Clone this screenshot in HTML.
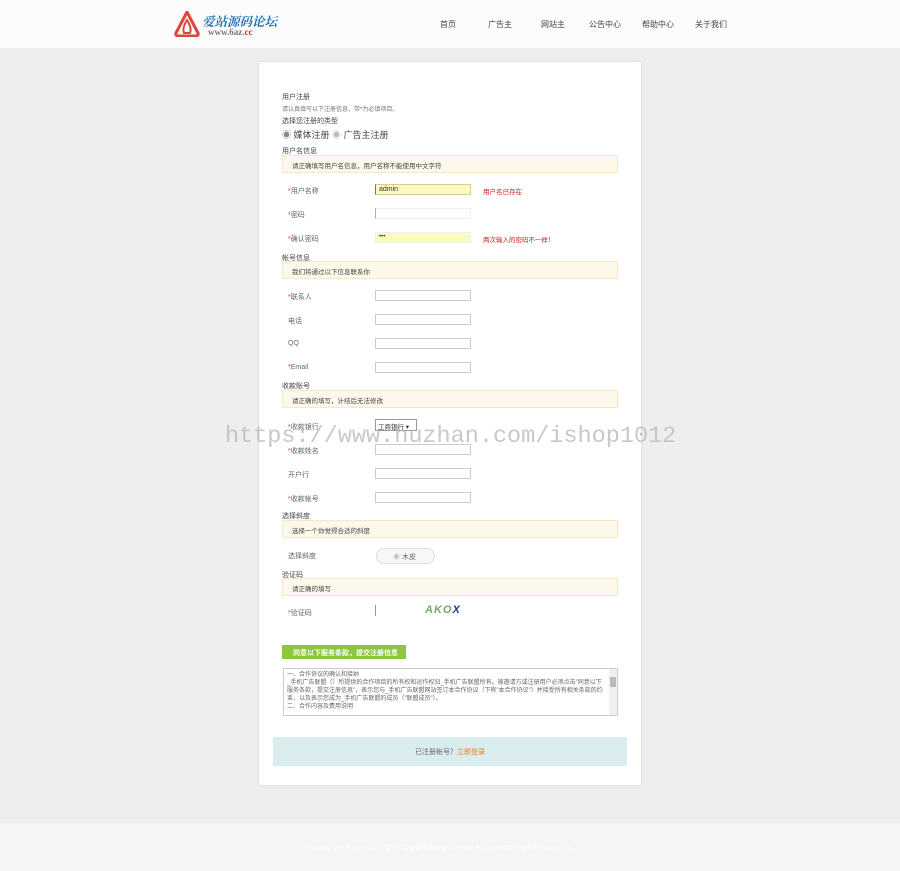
<!DOCTYPE html>
<html><head><meta charset="utf-8"><style>
*{margin:0;padding:0;box-sizing:border-box}
body{width:900px;height:871px;background:#eeeeee;font-family:"Liberation Sans","Noto Sans CJK SC",sans-serif;font-size:7px;color:#555;position:relative;overflow:hidden}
.a{position:absolute;white-space:nowrap}
.hdr{position:absolute;left:0;top:0;width:900px;height:48px;background:#fcfcfc}
.nav{font-size:8px;color:#444;top:19px}
.card{position:absolute;left:259px;top:62px;width:382px;height:723px;background:#fff;box-shadow:0 0 2px #ccc}
.box{position:absolute;left:282px;width:336px;height:18px;background:#fdf8ec;border:1px solid #f6e9c4;padding:4px 9px;font-size:6.5px;color:#444}
.lb{position:absolute;left:288px;font-size:7px;color:#666}
.lb i{color:#d33;font-style:normal}
.in{position:absolute;left:375px;width:96px;height:11px;border:1px solid #ccc;background:#fff;line-height:9px}
.sec{position:absolute;left:282px;font-size:7px;color:#444}
.err{position:absolute;left:483px;color:#c22;font-size:6.5px}
</style></head><body>
<div class="hdr"></div>
<svg class="a" style="left:174px;top:11px" width="26" height="26" viewBox="0 0 26 26"><path d="M13 1 L2 22 Q1 25 5 25 L21 25 Q25 25 24 22 Z" fill="none" stroke="#d9463e" stroke-width="3"/><path d="M13 9 Q8 17 10 22 L16 22 Q18 17 13 9Z" fill="none" stroke="#d9463e" stroke-width="2"/></svg>
<div class="a" style="left:202px;top:12px;font-size:12.5px;font-weight:bold;color:#1a6fb0;font-family:'Liberation Serif','Noto Serif CJK SC',serif;font-style:italic">爱站源码论坛</div>
<div class="a" style="left:208px;top:27px;font-size:9px;color:#777;font-family:'Liberation Serif',serif;font-weight:bold">www.6az.<span style="color:#e0262b">cc</span></div>
<div class="a nav" style="left:440px">首页</div>
<div class="a nav" style="left:488px">广告主</div>
<div class="a nav" style="left:541px">网站主</div>
<div class="a nav" style="left:589px">公告中心</div>
<div class="a nav" style="left:642px">帮助中心</div>
<div class="a nav" style="left:695px">关于我们</div>

<div class="card"></div>
<div class="a" style="left:282px;top:92px;color:#444">用户注册</div>
<div class="a" style="left:282px;top:104px;font-size:6px;color:#777">请认真填写以下注册信息，带<span style="color:#d33">*</span>为必填项目。</div>
<div class="a" style="left:282px;top:116px;color:#444">选择您注册的类型</div>
<div class="a" style="left:282px;top:128px;font-size:9px;color:#444"><span style="color:#888">◉</span> 媒体注册 <span style="color:#bbb">◉</span> 广告主注册</div>
<div class="sec" style="top:146px">用户名信息</div>
<div class="box" style="top:155px">请正确填写用户名信息，用户名称不能使用中文字符</div>
<div class="lb" style="top:186px"><i>*</i>用户名称</div>
<div class="in" style="top:184px;background:#fbfbc0;border-color:#e0c890;border-left:1px solid #b55;padding-left:3px;font-size:7px;color:#333">admin</div>
<div class="err" style="top:186px">用户名已存在</div>
<div class="lb" style="top:210px"><i>*</i>密码</div>
<div class="in" style="top:208px;border-color:#eee;border-left-color:#aaa"></div>
<div class="lb" style="top:234px"><i>*</i>确认密码</div>
<div class="in" style="top:232px;background:#fbfbc0;border-color:#eee;padding-left:3px;font-size:6px;color:#333">•••</div>
<div class="err" style="top:234px">两次输入的密码不一样！</div>
<div class="sec" style="top:253px">帐号信息</div>
<div class="box" style="top:261px">我们将通过以下信息联系你</div>
<div class="lb" style="top:292px"><i>*</i>联系人</div><div class="in" style="top:290px"></div>
<div class="lb" style="top:316px">电话</div><div class="in" style="top:314px"></div>
<div class="lb" style="top:340px">QQ</div><div class="in" style="top:338px"></div>
<div class="lb" style="top:364px"><i>*</i>Email</div><div class="in" style="top:362px"></div>
<div class="sec" style="top:381px">收款账号</div>
<div class="box" style="top:390px">请正确的填写，计结后无法修改</div>
<div class="lb" style="top:422px"><i>*</i>收款银行</div>
<div class="a" style="left:375px;top:419px;width:42px;height:12px;border:1px solid #999;font-size:6.5px;padding:1px 2px;color:#333">工商银行 ▾</div>
<div class="lb" style="top:446px"><i>*</i>收款姓名</div><div class="in" style="top:444px"></div>
<div class="lb" style="top:470px">开户行</div><div class="in" style="top:468px"></div>
<div class="lb" style="top:494px"><i>*</i>收款帐号</div><div class="in" style="top:492px"></div>
<div class="sec" style="top:511px">选择斜度</div>
<div class="box" style="top:520px">选择一个你觉得合适的斜度</div>
<div class="lb" style="top:551px">选择斜度</div>
<div class="a" style="left:376px;top:548px;width:59px;height:16px;border:1px solid #ddd;border-radius:8px;background:#f7f7f7;font-size:7px;padding:3px 0 0 16px;color:#666"><span style="color:#bbb">◉</span> 木皮</div>
<div class="sec" style="top:570px">验证码</div>
<div class="box" style="top:578px">请正确的填写</div>
<div class="lb" style="top:608px"><i>*</i>验证码</div>
<div class="a" style="left:375px;top:605px;width:1px;height:11px;background:#999"></div>
<div class="a" style="left:425px;top:604px;font-size:11px;font-weight:bold;color:#7a6;letter-spacing:1px;font-style:italic">AKO<span style="color:#238">X</span></div>
<div class="a" style="left:282px;top:645px;width:124px;height:14px;background:#8cc63e;color:#fff;font-size:7px;font-weight:bold;padding:3px 0 0 11px">同意以下服务条款，提交注册信息</div>
<div class="a" style="left:283px;top:668px;width:335px;height:48px;border:1px solid #ccc;background:#fff;font-size:6px;line-height:8px;padding:2px 12px 0 3px;white-space:normal;overflow:hidden;color:#666">一、合作协议的确认和接纳<br>_手机广告联盟（）所提供的合作项目的所有权和运作权归_手机广告联盟所有。被邀请方或注册用户必须点击"同意以下服务条款，提交注册信息"，表示您与_手机广告联盟网站签订本合作协议（下称"本合作协议"）并接受所有相关条款的约束，以及表示您成为_手机广告联盟的成员（"联盟成员"）。<br>二、合作内容及费用说明
<div style="position:absolute;right:0;top:0;width:8px;height:46px;background:#f0f0f0"><div style="margin:8px 1px;height:10px;background:#bbb"></div></div></div>
<div class="a" style="left:273px;top:737px;width:354px;height:29px;background:#d9edee;text-align:center;padding-top:10px;font-size:7px;color:#666">已注册帐号？<span style="color:#e87b1e">立即登录</span></div>
<div class="a" style="left:0;top:823px;width:900px;height:48px;background:#f5f5f5"></div>
<div class="a" style="left:305px;top:843px;font-size:6px;color:#fff">Copyright ©2015 www.6az.cc 手机广告联盟 版权所有 All Rights Reserved. 粤ICP备案号 Powered by</div>
<div class="a" style="left:225px;top:423px;font-size:23.5px;color:#bbb;opacity:.8;font-family:'Liberation Mono',monospace">https://www.huzhan.com/ishop1012</div>
</body></html>
